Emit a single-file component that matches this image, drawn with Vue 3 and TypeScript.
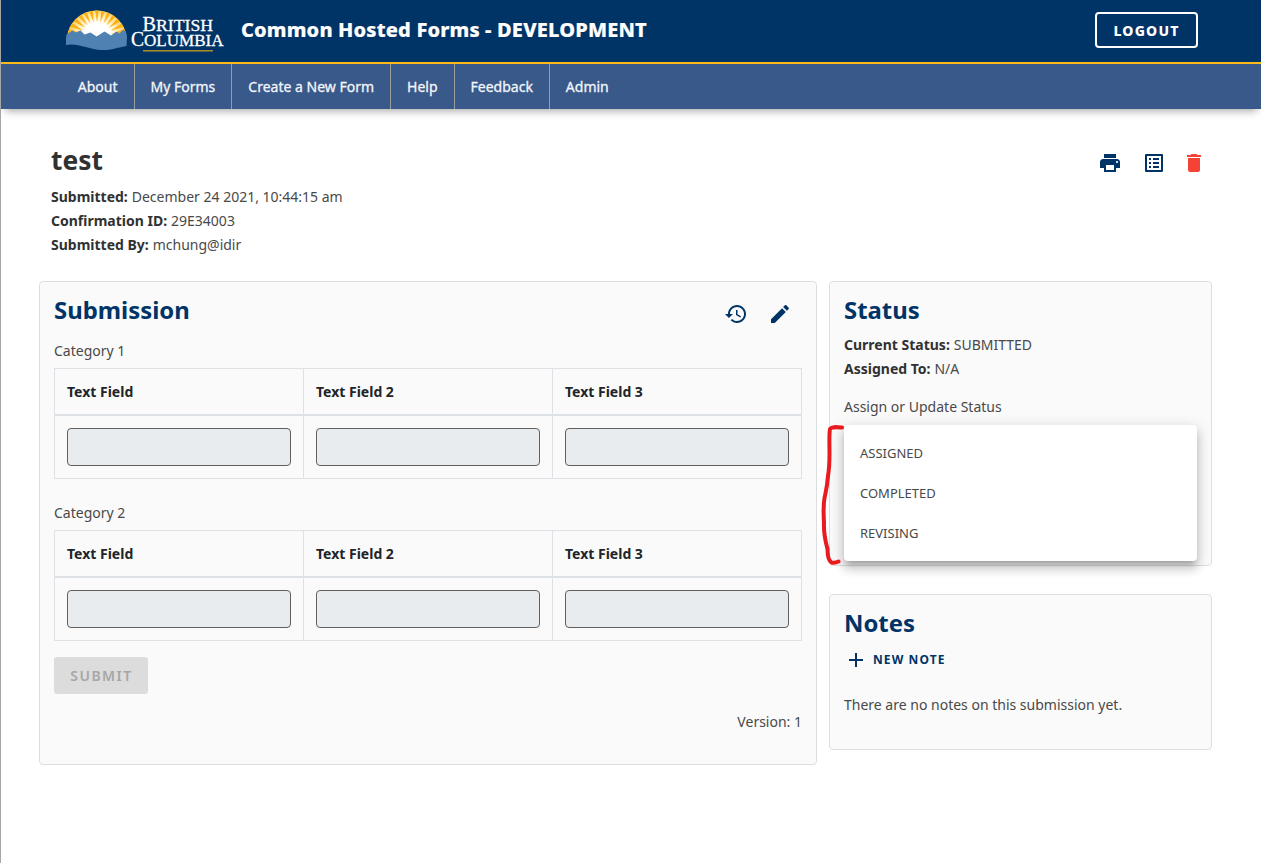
<script setup lang="ts">
interface Category { title: string; fields: string[] }

const navItems: string[] = ['About', 'My Forms', 'Create a New Form', 'Help', 'Feedback', 'Admin']
const details: { label: string; value: string }[] = [
  { label: 'Submitted:', value: 'December 24 2021, 10:44:15 am' },
  { label: 'Confirmation ID:', value: '29E34003' },
  { label: 'Submitted By:', value: 'mchung@idir' },
]
const fields = ['Text Field', 'Text Field 2', 'Text Field 3']
const categories: Category[] = [
  { title: 'Category 1', fields },
  { title: 'Category 2', fields },
]
const statuses: string[] = ['ASSIGNED', 'COMPLETED', 'REVISING']
const rays: number[] = [-78, -65, -52, -39, -26, -13, 0, 13, 26, 39, 52, 65, 78]
</script>

<template>
  <div class="app">
    <header class="header">
      <svg class="logo" width="160" height="44" viewBox="0 0 160 44">
        <defs>
          <clipPath id="sun"><path d="M2 30A29.800 29.300 0 0 1 61.500 30Z" /></clipPath>
          <radialGradient id="glow" gradientUnits="userSpaceOnUse" cx="32" cy="28" r="30">
            <stop offset="0.45" stop-color="#fff" />
            <stop offset="0.75" stop-color="#ffe49a" />
            <stop offset="1" stop-color="#fcc850" />
          </radialGradient>
        </defs>
        <g clip-path="url(#sun)">
          <rect width="63" height="32" fill="url(#glow)" />
          <path
            v-for="a in rays" :key="a" d="M32 14L29.300 -3H34.700Z" fill="#fbb116"
            :transform="`rotate(${a} 32 29)`"
          />
        </g>
        <path d="M1 30L1.500 26.500L7.500 22.500L10.500 24.500L15.500 22.500L19.500 26.500L25.500 24.500L31.500 28.500L39.500 23.500L46 27.500L51.500 23.500L54.500 25.500L58.500 21.500L61.500 25.500L62 29.500L61.500 38C50 40 46 42.500 36.500 42C24 41.500 12 34.500 1 37Z" fill="#4f81b3" />
        <g fill="#fff" stroke="#fff" stroke-width=".3" font-family="'Liberation Serif', serif">
          <text x="77.500" y="23" font-size="20" textLength="70.500" lengthAdjust="spacingAndGlyphs">B<tspan font-size="17.500">RITISH</tspan></text>
          <text x="66" y="38" font-size="20" textLength="92.500" lengthAdjust="spacingAndGlyphs">C<tspan font-size="17.500">OLUMBIA</tspan></text>
        </g>
        <rect x="78" y="42" width="70" height="1.500" fill="#a98f2c" />
      </svg>
      <h1 class="app-title">Common Hosted Forms - DEVELOPMENT</h1>
      <button class="logout">LOGOUT</button>
    </header>
    <nav class="nav">
      <a v-for="item in navItems" :key="item" class="nav-item">{{ item }}</a>
    </nav>

    <main>
      <section class="intro">
        <div>
          <h2 class="form-name">test</h2>
          <p v-for="d in details" :key="d.label" class="line"><strong>{{ d.label }}</strong> {{ d.value }}</p>
        </div>
        <div class="actions">
          <svg class="icon" viewBox="0 0 24 24"><path d="M19 8H5c-1.660 0-3 1.340-3 3v6h4v4h12v-4h4v-6c0-1.660-1.340-3-3-3zm-3 11H8v-5h8v5zm3-7c-.55 0-1-.45-1-1s.45-1 1-1 1 .45 1 1-.45 1-1 1zm-1-9H6v4h12V3z" /></svg>
          <svg class="icon list" viewBox="0 0 24 24"><path d="M19 5v14H5V5h14m1.100-2H3.900c-.5 0-.9.4-.9.9v16.200c0 .4.4.9.9.9h16.200c.4 0 .9-.5.9-.9V3.900c0-.5-.5-.9-.9-.9zM11 7h6v2h-6V7zm0 4h6v2h-6v-2zm0 4h6v2h-6zM7 7h2v2H7zm0 4h2v2H7zm0 4h2v2H7z" /></svg>
          <svg class="icon delete" viewBox="0 0 24 24"><path d="M6 19c0 1.100.9 2 2 2h8c1.100 0 2-.9 2-2V7H6v12zM19 4h-3.500l-1-1h-5l-1 1H5v2h14V4z" /></svg>
        </div>
      </section>

      <div class="columns">
        <section class="card submission">
          <div class="card-head">
            <h3 class="card-title">Submission</h3>
            <div class="card-icons">
              <svg class="icon" viewBox="0 0 24 24"><path d="M13 3c-4.970 0-9 4.030-9 9H1l3.890 3.890.07.14L9 12H6c0-3.870 3.130-7 7-7s7 3.130 7 7-3.130 7-7 7c-1.930 0-3.680-.79-4.940-2.060l-1.420 1.420C8.270 19.990 10.510 21 13 21c4.970 0 9-4.030 9-9s-4.030-9-9-9zm-1 5v5l4.280 2.540.72-1.210-3.500-2.080V8H12z" /></svg>
              <svg class="icon" viewBox="0 0 24 24"><path d="M3 17.250V21h3.750L17.810 9.940l-3.750-3.750L3 17.250zM20.710 7.040c.39-.39.39-1.020 0-1.410l-2.340-2.340c-.39-.39-1.020-.39-1.410 0l-1.830 1.830 3.750 3.750 1.830-1.830z" /></svg>
            </div>
          </div>
          <div v-for="c in categories" :key="c.title" class="category">
            <div class="category-title">{{ c.title }}</div>
            <div class="grid">
              <div v-for="f in c.fields" :key="f" class="column">
                <div class="th">{{ f }}</div>
                <div class="td"><div class="input"></div></div>
              </div>
            </div>
          </div>
          <button class="submit" disabled>SUBMIT</button>
          <div class="version">Version: 1</div>
        </section>

        <div class="side">
          <section class="card status">
            <h3 class="card-title">Status</h3>
            <p class="line"><strong>Current Status:</strong> SUBMITTED</p>
            <p class="line"><strong>Assigned To:</strong> N/A</p>
            <p class="line assign">Assign or Update Status</p>
            <div class="menu">
              <div v-for="s in statuses" :key="s" class="option">{{ s }}</div>
            </div>
            <svg class="bracket" width="26" height="144" viewBox="0 0 26 144">
              <path d="M22 5.500C16 5 12 4.500 10 7C9 11 9.500 22 9.500 32C9.500 43 9 48 8 54C7 66 6 69 4.500 76C3 84 3.500 92 4 101C3.500 113 6 121 7.500 127C7.500 135 9 139 11.500 140.500C14.500 141 16.500 140.500 18.500 139.500" />
            </svg>
          </section>
          <section class="card notes">
            <h3 class="card-title">Notes</h3>
            <button class="new-note">
              <svg class="icon" viewBox="0 0 24 24"><path d="M19 13h-6v6h-2v-6H5v-2h6V5h2v6h6v2z" /></svg>
              <span>NEW NOTE</span>
            </button>
            <p class="line empty">There are no notes on this submission yet.</p>
          </section>
        </div>
      </div>
    </main>
  </div>
</template>

<style>
body { margin: 0; background: #fff; }
</style>

<style scoped>
.app {
  box-sizing: border-box;
  width: 1261px;
  height: 863px;
  overflow: hidden;
  border-left: 1px solid #a6a6a6;
  background: #fff;
  color: #494949;
  font: 14px/24px "Noto Sans", sans-serif;
  white-space: nowrap;
}
h1, h2, h3, p { margin: 0; }
button { font-family: inherit; border: 0; padding: 0; }
strong, .form-name { color: #313132; }
strong { margin-right: .3px; }
.icon { width: 24px; height: 24px; fill: #003366; display: block; flex: none; }
.header {
  box-sizing: border-box;
  height: 64px;
  padding: 0 63px 0 64px;
  display: flex;
  align-items: center;
  background: #003366;
  border-bottom: 2px solid #fcba19;
}
.logo { display: block; flex: none; margin-top: -2px; }
.app-title { margin: -2px 0 0 16px; font-size: 20px; line-height: 28px; font-weight: 800; letter-spacing: .17px; color: #fff; -webkit-text-stroke: .2px #fff; }
.logout {
  box-sizing: border-box;
  margin: -2px 0 0 auto;
  width: 103px;
  height: 36px;
  border: 2px solid #fff;
  border-radius: 4px;
  background: transparent;
  color: #fff;
  font-size: 14px;
  font-weight: 800;
  letter-spacing: 1.2px;
}
.nav {
  display: flex;
  height: 45px;
  padding-left: 60.8px;
  background: #38598a;
  box-shadow: 0 6px 8px -4px rgba(0, 0, 0, .35);
}
.nav-item { padding: 0 16px; line-height: 45px; color: #f2f5f9; -webkit-text-stroke: .3px #f2f5f9; border-right: 1px solid #9b9b9b; }
.nav-item:last-child { border-right: 0; }
main { padding: 36px 49px 0 38px; }
.intro { display: flex; justify-content: space-between; height: 136px; padding: 0 6px 0 12px; }
.form-name { font-size: 26.4px; line-height: 30px; margin-bottom: 10px; }
.actions { display: flex; padding-top: 6px; }
.list { margin: 0 16px 0 20px; }
.delete { fill: #f44336; }
.columns { display: flex; gap: 12px; align-items: flex-start; }
.card { box-sizing: border-box; border: 1px solid #dcdee0; border-radius: 4px; background: #fafafa; padding: 14px; }
.card-title { margin-top: -1px; font-size: 23.9px; line-height: 30px; color: #003366; font-weight: 700; }
.submission { width: 778px; height: 484px; }
.card-head { display: flex; justify-content: space-between; height: 43px; }
.card-icons { display: flex; gap: 20px; padding: 6px 10px 0 0; }
.category { height: 162px; }
.category-title { height: 29px; line-height: 24px; }
.grid { display: flex; width: 748px; box-sizing: border-box; border: 1px solid #dee2e6; }
.column { flex: 1 1 0; border-right: 1px solid #dee2e6; }
.column:last-child { border-right: 0; }
.th { height: 45px; line-height: 45px; padding-left: 12px; font-weight: 700; color: #212529; border-bottom: 2px solid #dee2e6; }
.td { padding: 12px; }
.input { box-sizing: border-box; height: 38px; border: 1px solid #606060; border-radius: 4px; background: #e9ecef; }
.submit { display: block; margin-top: -6px; width: 94px; height: 37px; border-radius: 3px; background: #dcdcdc; color: #a6a6a6; font-size: 14px; font-weight: 600; letter-spacing: 1.5px; padding-left: 1px; }
.version { text-align: right; margin-top: 16px; }
.side { width: 383px; display: flex; flex-direction: column; gap: 28px; }
.status { position: relative; height: 285px; }
.status .card-title { margin-bottom: 8px; }
.assign { margin-top: 14px; }
.menu {
  position: absolute;
  left: 14px;
  top: 143px;
  width: 353px;
  height: 136px;
  box-sizing: border-box;
  padding: 8px 0;
  border-radius: 4px;
  background: #fff;
  box-shadow: 0 5px 5px -3px rgba(0, 0, 0, .2), 0 8px 10px 1px rgba(0, 0, 0, .14), 0 3px 14px 2px rgba(0, 0, 0, .12);
}
.option { height: 40px; line-height: 40px; padding-left: 16px; font-size: 13px; }
.bracket { position: absolute; left: -10px; top: 139.5px; fill: none; stroke: #e81b1e; stroke-width: 4; stroke-linecap: round; stroke-linejoin: round; }
.notes { height: 156px; }
.new-note { display: flex; align-items: center; height: 28px; margin-top: 8px; background: transparent; color: #003366; font-size: 12px; font-weight: 700; letter-spacing: 1.1px; }
.new-note span { margin: -1px 0 0 5px; }
.empty { margin-top: 19px; }
</style>
